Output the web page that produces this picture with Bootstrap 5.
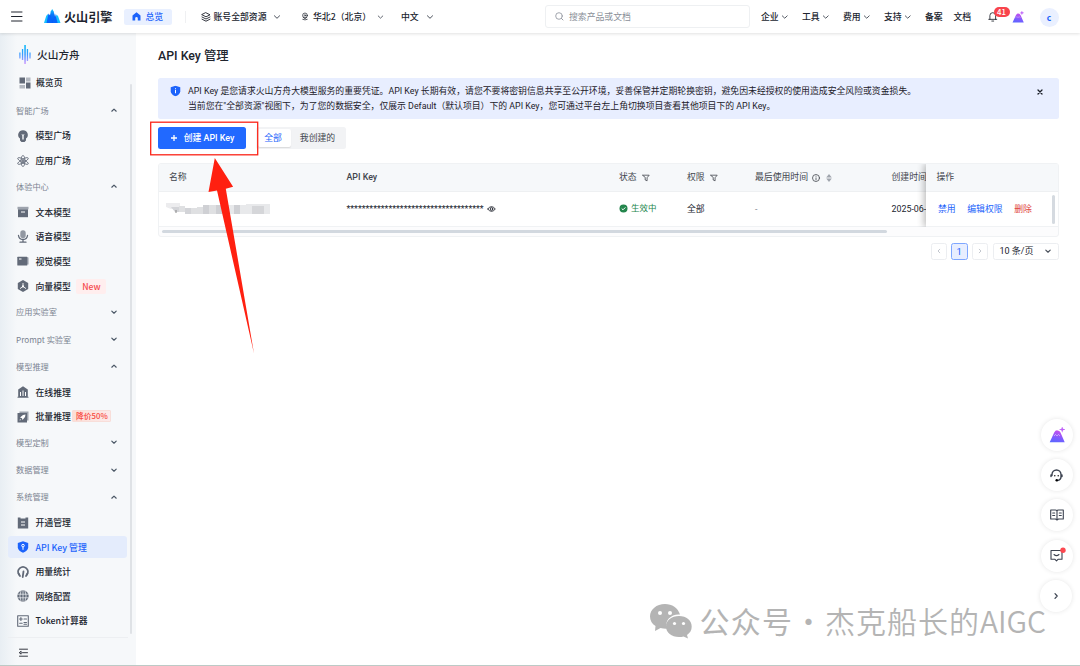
<!DOCTYPE html>
<html lang="zh-CN">
<head>
<meta charset="utf-8">
<title>API Key 管理</title>
<meta name="viewport" content="width=device-width, initial-scale=1">
<link href="https://cdn.jsdelivr.net/npm/bootstrap@5.3.0/dist/css/bootstrap.min.css" rel="stylesheet">
<script src="https://cdn.jsdelivr.net/npm/bootstrap@5.3.0/dist/js/bootstrap.bundle.min.js" defer></script>
<style>
:root{--ink:#20242e;--blue:#1c63fb;--muted:#7b8391;--icon:#626a78}
body{width:1080px;height:666px;overflow:hidden;background:#fff;color:var(--ink);font:400 8.85px/15px Roboto,"Noto Sans CJK SC",sans-serif;white-space:nowrap}
svg{display:block;flex:none;overflow:visible}
.ln{fill:none;stroke:currentColor;stroke-linecap:round;stroke-linejoin:round}
.topbar{height:33px;display:grid;align-items:center;grid-template-columns:10px 34px 80px 61px 16px 100px 100px 144px 216px 41px 41px 41px 41px 28.5px 35px 24px 27px 1fr;box-shadow:0 1px 3px rgba(0,0,0,.12);z-index:3;background:#fff;font-family:"Noto Sans CJK SC",sans-serif;font-weight:500;position:relative}
.topbar use{color:#4a505b}
.brand{font-size:12.1px;font-weight:700;gap:3.5px}
.brand span{position:relative;top:-.5px}
.pill{width:47.5px;height:16px;border-radius:2.5px;background:#e9f0ff;color:var(--blue)}
.searchbox{width:205px;height:23px;border:1px solid #eef0f2;border-radius:3px;color:#8a8f99;font-weight:400;padding-left:8.5px;gap:5.5px}
.bubble{left:6px;top:-4px;width:16px;height:10px;border-radius:5px;background:#f8444c;color:#fff;font:500 7.8px/10px "Noto Sans CJK SC",sans-serif}
.avatar{width:19px;height:19px;background:#eaf0ff;color:var(--blue);font:700 8.5px/18px "Noto Sans CJK SC",sans-serif;margin-top:1px}
.side{width:136px;height:633px;background:linear-gradient(90deg,#e8eef3,#f6f8fa 17px);font-family:"Noto Sans CJK SC",sans-serif;font-weight:500;position:relative}
.side-title{height:43.1px;padding-left:19px;gap:6px;font-size:10.7px}
.side-item{height:24.6px;padding-left:17px;gap:6.5px}
.side-item>svg{color:var(--icon)}
.side-item.active{position:relative;color:var(--blue);z-index:0}
.side-item.active>svg{color:var(--blue)}
.side-item.active::before{content:"";position:absolute;inset:1.3px 9px 1.3px 8px;background:#e4ecfc;border-radius:3px;z-index:-1}
.side-group{height:27.13px;padding:0 18px 0 16px;color:var(--muted);font-weight:400;font-size:8.2px}
.side-group svg{color:#4a5665}
.tag-new{width:30px;height:15px;margin-left:-1px;background:#ffeeee;color:#f5484c;border-radius:2px;font-size:8.6px}
.tag-off{width:39px;height:12px;margin-left:-5px;margin-top:-2px;background:linear-gradient(90deg,#fdded5,#fbeaea);border:1px solid #f8ded9;color:#f8493f;border-radius:1px;font-size:7.8px;line-height:10px}
.side-track{right:4px;top:51px;width:2px;height:550px;background:#dfe2e6;border-radius:1px}
.side-foot{margin:4.2px 8px 0;padding:10px 0 0 10px;border-top:1px solid #edeff2}
.main{padding:0 21px 0 22px;width:944px}
.page-title{font-size:12.35px;font-weight:500;height:45px;line-height:46px}
.notice{height:41px;border-radius:2.5px;background:#e8eeff;padding:6px 15px 0 12px;gap:7px;line-height:15.1px;color:#1c2029}
.tools{margin-top:8px;height:22px}
.btn-new{width:88px;height:22px;border-radius:2.5px;background:#2169ff;color:#fff;font-weight:500;gap:6px}
.seg{margin-left:10px;width:90px;height:22px;background:#f2f3f5;border-radius:2.5px;padding:2px;color:#41464f}
.seg span{height:18px;line-height:19px;text-align:center}
.seg .on{width:33px;padding-right:3px;background:#fff;color:var(--blue);border-radius:2px;box-shadow:0 1px 1px rgba(0,0,0,.1)}
.grid-table{margin-top:14px;height:74px;border:1px solid #f0f2f4;border-radius:3px;position:relative;overflow:hidden;background:#fcfcfd}
.tr-row{display:grid;grid-template-columns:177.5px 272.5px 68px 68px 136.5px 1fr;padding-left:10px;align-items:center}
.tr-head{height:28px;background:#f6f8fa;border-bottom:1px solid #eef0f2;color:#42464e}
.tr-data{height:35px;background:#fff;border-bottom:1px solid #f0f2f4}
.ops{right:0;top:0;width:132px;height:63px;box-shadow:-2px 0 7px rgba(0,0,0,.27);clip-path:inset(0 0 0 -9px)}
.ops-head{height:28px;background:#f6f8fa;border-bottom:1px solid #eef0f2;padding-left:10.500px;color:#42464e}
.ops-body{height:35px;background:#fff;padding-left:12px;gap:11.6px;color:var(--blue);border-bottom:1px solid #f0f2f4}
.vscroll{right:3px;top:31px;width:3px;height:29px;border-radius:2px;background:#d5dae0}
.hscroll{height:3px;width:725px;margin:3px 0 0 2.5px;border-radius:2px;background:#d2d8df}
.masked{width:105px;height:12px;margin-left:-3px}
.pager{margin-top:5.5px;gap:4px}
.pager>span{height:17px;width:16.5px;border:1px solid #eceef1;border-radius:2.5px;color:#b4b9c2}
.pager .cur{border-color:#7ea6ff;background:#e8eeff;color:var(--blue);font-size:9.5px}
.pager .size{width:66px;margin-left:1px;padding:0 6px 0 5.5px;color:var(--ink);font-size:9px}
.pager .size svg{color:#4a505b}
.callout{left:0;top:0;pointer-events:none;z-index:5}
.float-rail{right:7.5px;top:419px;gap:8.2px;z-index:4}
.float-rail>span{width:32px;height:32px;border-radius:50%;background:#fff;box-shadow:0 0 5px rgba(0,0,0,.1);position:relative;color:#3b4250}
.float-rail>span:last-child{right:1px}
.wmark{left:650px;top:599px;color:#b4b4b4;font:400 30px/44px "Noto Sans CJK SC",sans-serif;z-index:2}
.wmark span{position:relative;top:-1.5px}
.wmark .thin{font-weight:350;letter-spacing:1px}
.wmark .middot{width:32px;text-align:center}
.baseline{left:0;bottom:0;width:1080px;height:1px;background:#bccac6;z-index:6}
</style>
</head>
<body>
<svg width="0" height="0" class="position-absolute">
<defs>
<linearGradient id="g1" x2="0" y2="1"><stop stop-color="#18c8ff"/><stop offset=".4" stop-color="#0878fa"/><stop offset="1" stop-color="#0758f8"/></linearGradient>
<linearGradient id="g2" x2="0" y2="1"><stop stop-color="#00b8f8"/><stop offset=".5" stop-color="#3c9bff"/><stop offset="1" stop-color="#d398ff"/></linearGradient>
<linearGradient id="g3" x1="0" y1="1" x2=".3" y2="0"><stop stop-color="#5568ff"/><stop offset=".45" stop-color="#7d5cff"/><stop offset="1" stop-color="#c050ee"/></linearGradient>
<symbol id="down" viewBox="0 0 8 8"><path class="ln" d="M1.4 2.8 4 5.3 6.6 2.8"/></symbol>
<symbol id="up" viewBox="0 0 8 8"><path class="ln" d="M1.8 5.2 4 3.1 6.2 5.2" stroke-width="1.2"/></symbol>
<symbol id="dn" viewBox="0 0 8 8"><path class="ln" d="M1.8 3.1 4 5.2 6.2 3.1" stroke-width="1.2"/></symbol>
<symbol id="funnel" viewBox="0 0 8 8"><path class="ln" d="M.8 1.2h6.4L5.1 3.7v3.1L3.2 6V3.700z" stroke-width=".8"/></symbol>
<symbol id="peak" viewBox="0 0 16 16"><path d="M.7 15.2 5.2 5.6q1.200-2.500 3.300-2.200 2 0 3 2.200l4.200 9.600z" fill="url(#g3)"/><path d="m5 9 1.500-1.600L8 9l1.500-1.600L11 9" fill="none" stroke="#fff" stroke-opacity=".5" stroke-width=".9"/><path d="M13.200-.8 14 1.700 16.500 2.500 14 3.300 13.200 5.800 12.400 3.300 9.900 2.500 12.400 1.700z" fill="#bf62f8"/></symbol>
<symbol id="shield" viewBox="0 0 12 12"><path d="M6 .3 11.200 2v4.3c0 2.500-2.200 4.400-5.200 5.500C3 10.700.8 8.800.8 6.300V2z" fill="currentColor"/></symbol>
</defs></svg>

<header class="topbar">
 <i></i>
 <svg width="13" height="12" viewBox="0 0 13 12"><path class="ln" stroke="#5d636d" d="M1.500 1H12M1.500 5.500H12M1.500 10H12"/></svg>
 <div class="brand d-flex align-items-center"><svg width="16.500" height="15" viewBox="0 0 16.500 15"><path fill="#16bfff" d="M0 14 2.200 7 3.700 5l2 9zM10.500 14 12.500 5.500l1.500 1.500 2.500 7z"/><path fill="url(#g1)" d="M4.500 14 6.700 2.500 8.200 0 9.700 2.500l2.600 11.500z"/><path fill="#0865fa" d="m2.500 14 2-9.500 2.500 3 1 6.500zM8.500 14l2.500-9.500 2.700 9.500z"/></svg><span>火山引擎</span></div>
 <div class="pill d-flex align-items-center justify-content-center gap-1"><svg width="9" height="9" viewBox="0 0 9 9"><path fill="currentColor" d="M4.500.3 8.500 3.500V8.500H5.800V6Q5.600 5 4.500 5T3.200 6V8.500H.5V3.500z"/></svg><span>总览</span></div>
 <svg width="2" height="12"><path d="M.5 0v12" stroke="#eff0f2"/></svg>
 <div class="d-flex align-items-center"><svg width="10" height="10" viewBox="0 0 10 10"><path class="ln" stroke-width=".9" d="M5 .8 9 2.800 5 4.800 1 2.800zM1 5l4 2 4-2M1 7.200l4 2 4-2"/></svg><span style="margin-left:2.500px">账号全部资源</span><svg style="margin-left:6.500px" width="8" height="8"><use href="#down"/></svg></div>
 <div class="d-flex align-items-center"><svg width="8" height="9" viewBox="0 0 9 9"><circle class="ln" cx="4.500" cy="3.300" r="2.700" stroke-width=".8"/><circle class="ln" cx="4.500" cy="3.300" r=".9" stroke-width=".7"/><path class="ln" d="M2.500 5.500 4.500 7l2-1.500M2 7.800Q4.500 9 7 7.800" stroke-width=".8"/></svg><span style="margin-left:4px">华北2（北京）</span><svg style="margin-left:5.500px" width="7" height="8"><use href="#down"/></svg></div>
 <div class="d-flex align-items-center"><span>中文</span><svg style="margin-left:7px" width="8" height="8"><use href="#down"/></svg></div>
 <div class="searchbox d-flex align-items-center"><svg width="9" height="9" viewBox="0 0 9 9"><circle class="ln" cx="4" cy="4" r="3.300" stroke-width=".8"/><path class="ln" d="m6.500 6.500 1.500 1.500" stroke-width=".9"/></svg><span>搜索产品或文档</span></div>
 <div class="d-flex align-items-center"><span>企业</span><svg style="margin-left:2.500px" width="7.500" height="8"><use href="#down"/></svg></div>
 <div class="d-flex align-items-center"><span>工具</span><svg style="margin-left:2.500px" width="7.500" height="8"><use href="#down"/></svg></div>
 <div class="d-flex align-items-center"><span>费用</span><svg style="margin-left:2.500px" width="7.500" height="8"><use href="#down"/></svg></div>
 <div class="d-flex align-items-center"><span>支持</span><svg style="margin-left:2.500px" width="7.500" height="8"><use href="#down"/></svg></div>
 <span>备案</span><span>文档</span>
 <div class="position-relative" style="left:-1px"><svg width="9.500" height="11" viewBox="0 0 10 11"><path class="ln" stroke-width=".9" d="M.8 8.500h8.400M2 8.500v-4q0-3 3-3t3 3v4M4 10.300h2"/></svg><span class="bubble position-absolute text-center">41</span></div>
 <svg width="12" height="12" style="margin-left:-1px"><use href="#peak"/></svg>
 <div class="avatar rounded-circle text-center">c</div>
</header>

<div class="d-flex">
<nav class="side">
 <div class="side-title d-flex align-items-center"><svg width="12" height="20" viewBox="0 0 12 20"><path d="M5.300 0h1.500v19H5.300zM2.900 4h1.300v11H2.900zM7.800 4h1.300v12H7.800zM.3 7.500h1.200v6H.3zM10.400 7.500h1.200v6h-1.200z" fill="url(#g2)"/></svg><span>火山方舟</span></div>
 <div class="side-item d-flex align-items-center" style="margin:-5.500px 0 1.350px 2px"><svg width="12" height="12" viewBox="0 0 12 12"><path fill="currentColor" d="M.5.500H6v6H.5zM7 5.500h4.500v6H7z"/><path fill="#b3b8c0" d="M7 .5h4.500v4H7zM.5 8H6v3.500H.5z"/></svg><span style="margin-left:-1.500px">概览页</span></div>
 <div class="side-group d-flex align-items-center justify-content-between">智能广场<svg width="8" height="8"><use href="#up"/></svg></div>
 <div class="side-item d-flex align-items-center"><svg width="12" height="12" viewBox="0 0 12 12"><path fill="currentColor" fill-rule="evenodd" d="M6 .2a4.700 4.700 0 0 1 3 8.400v2L7.500 12h-3L3 10.600v-2A4.700 4.700 0 0 1 6 .2M5.300 5.500v4h1.400v-4L7.700 4.500H4.300z"/></svg><span>模型广场</span></div>
 <div class="side-item d-flex align-items-center"><svg width="12" height="12" viewBox="0 0 12 12"><g class="ln" stroke-width=".8"><ellipse cx="6" cy="6" rx="2" ry="5.600"/><ellipse cx="6" cy="6" rx="1.800" ry="6" transform="rotate(60 6 6)"/><ellipse cx="6" cy="6" rx="1.800" ry="6" transform="rotate(120 6 6)"/></g><circle cx="6" cy="6" r="1.100" fill="currentColor"/></svg><span>应用广场</span></div>
 <div class="side-group d-flex align-items-center justify-content-between">体验中心<svg width="8" height="8"><use href="#up"/></svg></div>
 <div class="side-item d-flex align-items-center"><svg width="12" height="12" viewBox="0 0 12 12"><path fill="#9da3ad" d="M.5.800h11v2.500H.5z"/><path fill="currentColor" d="M1 3.300h10v7.900H1z"/><path d="M4 6h4" stroke="#fff"/></svg><span>文本模型</span></div>
 <div class="side-item d-flex align-items-center"><svg width="12" height="13" viewBox="0 0 12 13"><rect x="3.300" y=".2" width="5.400" height="8" rx="2.700" fill="#9298a2"/><path class="ln" stroke-width="1.300" d="M1.500 5.500Q2 9.500 6 9.500t4.500-4M6 9.500V12M3 12.200h6"/></svg><span>语音模型</span></div>
 <div class="side-item d-flex align-items-center"><svg width="12" height="12" viewBox="0 0 12 12"><path fill="#a3a9b2" d="M9 2.500h2.600v7H9z"/><rect x=".3" y="1.700" width="10" height="8.800" rx=".5" fill="currentColor"/><path d="M2 4h2.500" stroke="#fff"/></svg><span>视觉模型</span></div>
 <div class="side-item d-flex align-items-center"><svg width="12" height="12" viewBox="0 0 12 12"><path fill="currentColor" d="m6 .1 5.200 2.900v6L6 11.900.8 9V3z"/><path d="M6 3v3.500L3 8.600M6 6.500l3 2.100" fill="none" stroke="#fff" stroke-width=".9"/><circle cx="6" cy="6.300" r="1.100" fill="#fff"/></svg><span>向量模型</span><span class="tag-new text-center">New</span></div>
 <div class="side-group d-flex align-items-center justify-content-between">应用实验室<svg width="8" height="8"><use href="#dn"/></svg></div>
 <div class="side-group d-flex align-items-center justify-content-between">Prompt 实验室<svg width="8" height="8"><use href="#dn"/></svg></div>
 <div class="side-group d-flex align-items-center justify-content-between">模型推理<svg width="8" height="8"><use href="#up"/></svg></div>
 <div class="side-item d-flex align-items-center"><svg width="12" height="12" viewBox="0 0 12 12"><path fill="currentColor" d="m6 .2 4.800 3.300v7.300h.7v1H.5v-1h.7V3.500z"/><path d="M3.500 6v4M6 4.500V10M8.500 6v4" stroke="#fff"/></svg><span>在线推理</span></div>
 <div class="side-item d-flex align-items-center"><svg width="12" height="12" viewBox="0 0 12 12"><path fill="#9da3ad" d="M2.500.500h9v9h-2v-7h-7z"/><path fill="currentColor" d="M.5 2h9.500v9.500H.5z"/><path fill="#fff" d="M8.500 3.500 8 6 5.500 9 5 7.300 3 6.500 6 4zM3 8l1 1-1.500.5z"/></svg><span>批量推理</span><span class="tag-off text-center">降价50%</span></div>
 <div class="side-group d-flex align-items-center justify-content-between">模型定制<svg width="8" height="8"><use href="#dn"/></svg></div>
 <div class="side-group d-flex align-items-center justify-content-between">数据管理<svg width="8" height="8"><use href="#dn"/></svg></div>
 <div class="side-group d-flex align-items-center justify-content-between">系统管理<svg width="8" height="8"><use href="#up"/></svg></div>
 <div class="side-item d-flex align-items-center"><svg width="12" height="12" viewBox="0 0 12 12"><path fill="currentColor" d="M.8.500h2.700v1h5v-1h2.700v11H.8z"/><path d="M4 5h4M4 8h4" stroke="#fff"/></svg><span>开通管理</span></div>
 <div class="side-item active d-flex align-items-center"><svg width="12" height="12" viewBox="0 0 12 12"><use href="#shield"/><circle cx="6" cy="4.600" r="1.300" fill="none" stroke="#fff"/><path d="M6 6v2.800" stroke="#fff"/></svg><span>API Key 管理</span></div>
 <div class="side-item d-flex align-items-center"><svg width="12" height="12" viewBox="0 0 12 12"><path class="ln" stroke="#979daa" stroke-width="1.700" d="M2 8.500A4.800 4.800 0 1 1 10 8.500"/><path class="ln" stroke-width="1.800" d="M1.500 7.500 3 10M10.500 7.500 9 10M6.500 5.500 5.700 11"/></svg><span>用量统计</span></div>
 <div class="side-item d-flex align-items-center"><svg width="12" height="12" viewBox="0 0 12 12"><circle cx="6" cy="6" r="5.700" fill="currentColor"/><path d="M6 .3v11.400M.3 4.200h11.400M.3 7.800h11.400M4 .8Q1.800 6 4 11.200M8 .8q2.200 5.200 0 10.400" fill="none" stroke="#f6f8fa" stroke-width=".7"/></svg><span>网络配置</span></div>
 <div class="side-item d-flex align-items-center"><svg width="12" height="12" viewBox="0 0 12 12"><path class="ln" stroke-width="1.100" d="M.7.700h10.600v10.600H.7zM2.500 4h2.800M3.900 2.600v2.800M7 4h2.500M2.700 8.200h2.500M7 7.500h2.500M7 9.200h2.500"/></svg><span>Token计算器</span></div>
 <div class="side-foot"><svg width="11" height="10" viewBox="0 0 11 10"><path class="ln" stroke="#4b5361" stroke-width=".9" d="M1.500 1.200h8M4.500 4.700h5M1.500 8.200h8M2.800 3.500 1.200 4.700 2.800 5.900z"/></svg></div>
 <i class="side-track position-absolute"></i>
</nav>

<main class="main">
 <h1 class="page-title m-0">API Key 管理</h1>
 <section class="notice d-flex"><svg style="margin-top:1px" width="11" height="12" viewBox="0 0 12 12" color="#1c63fb"><use href="#shield"/><path d="M6 5v3.500M6 3v1" stroke="#fff" stroke-width="1.100"/></svg><div>API Key 是您请求火山方舟大模型服务的重要凭证。API Key 长期有效，请您不要将密钥信息共享至公开环境，妥善保管并定期轮换密钥，避免因未经授权的使用造成安全风险或资金损失。<br>当前您在"全部资源"视图下，为了您的数据安全，仅展示 Default（默认项目）下的 API Key，您可通过平台左上角切换项目查看其他项目下的 API Key。</div><svg class="ms-auto" style="margin-top:4px" width="8" height="8" viewBox="0 0 8 8"><path class="ln" stroke-width="1.300" d="m2 2 4 4m0-4L2 6"/></svg></section>
 <div class="tools d-flex"><button type="button" class="btn-new border-0 p-0 d-flex align-items-center justify-content-center"><svg width="8" height="8" viewBox="0 0 8 8"><path d="M4 1v6M1 4h6" stroke="#fff" stroke-width="1.300"/></svg><span>创建 API Key</span></button><div class="seg d-flex"><span class="on">全部</span><span class="flex-fill">我创建的</span></div></div>
 <section class="grid-table">
  <div class="tr-row tr-head"><span>名称</span><span style="font-weight:500">API Key</span><span class="d-flex align-items-center" style="gap:5.500px">状态 <svg width="8" height="8"><use href="#funnel"/></svg></span><span class="d-flex align-items-center" style="gap:5.500px">权限 <svg width="8" height="8"><use href="#funnel"/></svg></span><span class="d-flex align-items-center">最后使用时间<svg style="margin:0 6.500px 0 3.500px" width="8" height="8" viewBox="0 0 8 8"><circle class="ln" cx="4" cy="4" r="3.500" stroke-width=".8"/><path d="M4 3.500v2.700M4 1.800v.9" stroke="currentColor" stroke-width=".8"/></svg><svg width="6" height="8" viewBox="0 0 6 8"><path fill="#a1a6ae" d="M3 0 5.800 3.500H.2zM3 8 .2 4.500h5.600z"/></svg></span><span>创建时间</span></div>
  <div class="tr-row tr-data"><svg class="masked" viewBox="0 0 105 12"><path fill="#ececee" d="M0 0h14v6H5L0 4z"/><path fill="#d3d4d8" d="M5 4h9v5H9zM19 5h6v6h-6z"/><path fill="#dfe0e2" d="M13 3h6v6h-6zM25 5h6v6h-6zM31 4h6v7h-6zM43 2h7v9h-7zM56 2h6v9h-6z"/><path fill="#cfd0d4" d="M37 2h6v9h-6zM50 2h6v9h-6zM68 2h6v9h-6z"/><path fill="#e8e9eb" d="M62 2h6v9h-6zM74 2h6v9h-6zM80 1h24v10H80z"/><path fill="#d5d6d9" d="M86 3h12v8H86z"/><path d="M10 7v3" stroke="#888"/></svg><span class="d-flex align-items-center"><span style="padding-top:1px">************************************</span><svg style="margin-left:3px" width="9" height="8" viewBox="0 0 9 8"><path class="ln" stroke-width=".9" d="M.7 4Q4.500-.8 8.300 4 4.500 8.800.7 4"/><circle class="ln" cx="4.500" cy="4" r="1.300" stroke-width=".9"/></svg></span><span class="d-flex align-items-center" style="color:#24864d;gap:3px;margin-top:-1px"><svg width="9" height="9" viewBox="0 0 9 9"><circle cx="4.500" cy="4.500" r="4" fill="currentColor"/><path d="M2.700 4.500 4 5.800l2.400-2.400" fill="none" stroke="#fff"/></svg><span style="font-size:8.500px">生效中</span></span><span>全部</span><span style="color:#868b94">-</span><span>2025-06-10</span></div>
  <div class="hscroll"></div>
  <div class="ops position-absolute"><div class="ops-head d-flex align-items-center">操作</div><div class="ops-body d-flex align-items-center"><span>禁用</span><span>编辑权限</span><span style="color:#e0443f">删除</span></div></div>
  <i class="vscroll position-absolute"></i>
 </section>
 <div class="pager d-flex justify-content-end"><span class="d-flex align-items-center justify-content-center"><svg width="6" height="6" viewBox="0 0 6 6"><path class="ln" stroke-width=".8" d="M3.800 1.200 2 3l1.800 1.800"/></svg></span><span class="cur d-flex align-items-center justify-content-center">1</span><span class="d-flex align-items-center justify-content-center"><svg width="6" height="6" viewBox="0 0 6 6"><path class="ln" stroke-width=".8" d="M2.200 1.200 4 3 2.200 4.800"/></svg></span><span class="size d-flex align-items-center justify-content-between">10 条/页<svg width="8" height="8"><use href="#dn"/></svg></span></div>
</main>
</div>

<svg class="callout position-absolute" width="270" height="360" viewBox="0 0 270 360"><rect x="150.700" y="122.200" width="107" height="32.600" fill="none" stroke="#fb2418" stroke-width="1.300"/><path fill="#ff2010" d="m214.800 158 18.300 28.700-7.300 2L254 353.500 217 190.500l-8.500 1.500z"/></svg>

<div class="wmark position-absolute d-flex align-items-center"><svg width="42" height="36" viewBox="0 0 42 36"><path fill="currentColor" d="M15 1C6.500 1 0 6.500 0 13.500c0 4 2 7.300 5.500 9.500L5 28l5.500-3q3 .8 6 .7C14 17 22 10.500 30 11.500 28 5 22 1 15 1M29 13C21.500 13 16 17.500 16 23.500S21.500 34 29 34q2.500 0 4.500-.6L38 35.500 37 32c3-2 4.700-4.700 4.700-8.500C41.700 17.500 36.500 13 29 13"/><g fill="#fff"><circle cx="10" cy="10" r="2"/><circle cx="20" cy="10" r="2"/><circle cx="24.500" cy="20.500" r="1.600"/><circle cx="33.500" cy="20.500" r="1.600"/></g></svg><span style="margin-left:7.500px;letter-spacing:1.200px">公众号</span><span class="middot thin">·</span><span class="thin">杰克船长的</span><span class="thin" style="letter-spacing:-.100px">AIGC</span></div>

<aside class="float-rail position-absolute d-flex flex-column">
 <span class="d-flex align-items-center justify-content-center"><svg width="16" height="16"><use href="#peak"/></svg></span>
 <span class="d-flex align-items-center justify-content-center"><svg width="13" height="13" viewBox="0 0 13 13"><path class="ln" stroke="#171a22" stroke-width="1.400" d="M2 6.500V5.500a4.500 4.500 0 0 1 9 0v2.300q0 3.200-3.700 3.700M1 6v1.500M12 6v1.500"/><circle cx="4.800" cy="6.700" r=".7"/><circle cx="8.200" cy="6.700" r=".7"/><circle cx="6.700" cy="11.300" r="1.200"/></svg></span>
 <span class="d-flex align-items-center justify-content-center"><svg width="14" height="12" viewBox="0 0 14 12"><path class="ln" stroke-width="1.100" d="M.7 1h4.800Q7 1 7 2.200 7 1 8.500 1h4.800v9H8.500L7 11 5.500 10H.7zM7 2.200V11M2.700 4h2M2.700 6.500h2M9.300 4h2M9.300 6.500h2"/></svg></span>
 <span class="d-flex align-items-center justify-content-center"><svg width="13" height="13" viewBox="0 0 13 13"><path class="ln" stroke-width="1.100" d="M1 1.500h11v8.800H8L6.500 11.800 5 10.300H1zM4 5.500q2.500 2.200 5 0"/><circle cx="13" cy="1.300" r="2.700" fill="#fc4850"/></svg></span>
 <span class="d-flex align-items-center justify-content-center"><svg width="8" height="8" viewBox="0 0 8 8"><path class="ln" stroke-width="1.200" d="M3 1.700 5.200 4 3 6.300"/></svg></span>
</aside>
<i class="baseline position-absolute"></i>
</body>
</html>
